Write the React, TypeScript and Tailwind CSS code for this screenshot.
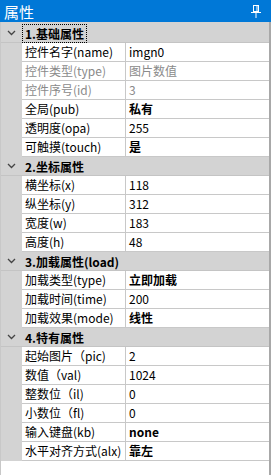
import React from "react";

type Row = { k: string; v: string; dim?: boolean; bold?: boolean };
type Sec = { title: string; rows: Row[]; focus?: boolean };

const secs: Sec[] = [
  {
    title: "1.基础属性",
    focus: true,
    rows: [
      { k: "控件名字(name)", v: "imgn0" },
      { k: "控件类型(type)", v: "图片数值", dim: true },
      { k: "控件序号(id)", v: "3", dim: true },
      { k: "全局(pub)", v: "私有", bold: true },
      { k: "透明度(opa)", v: "255" },
      { k: "可触摸(touch)", v: "是", bold: true },
    ],
  },
  {
    title: "2.坐标属性",
    rows: [
      { k: "横坐标(x)", v: "118" },
      { k: "纵坐标(y)", v: "312" },
      { k: "宽度(w)", v: "183" },
      { k: "高度(h)", v: "48" },
    ],
  },
  {
    title: "3.加载属性(load)",
    rows: [
      { k: "加载类型(type)", v: "立即加载", bold: true },
      { k: "加载时间(time)", v: "200" },
      { k: "加载效果(mode)", v: "线性", bold: true },
    ],
  },
  {
    title: "4.特有属性",
    rows: [
      { k: "起始图片（pic)", v: "2" },
      { k: "数值（val)", v: "1024" },
      { k: "整数位（il)", v: "0" },
      { k: "小数位（fl)", v: "0" },
      { k: "输入键盘(kb)", v: "none", bold: true },
      { k: "水平对齐方式(alx)", v: "靠左", bold: true },
    ],
  },
];

const font = { fontFamily: '"Noto Sans CJK SC", "Noto Sans", sans-serif' };

function Chevron() {
  return (
    <svg width="9" height="6" viewBox="0 0 9 6" className="block">
      <polyline points="1,1 4.5,4.5 8,1" fill="none" stroke="#444" strokeWidth="1.3" />
    </svg>
  );
}

function Pin() {
  return (
    <svg width="10" height="13" viewBox="0 0 10 13" className="block">
      <rect x="2.5" y="0.5" width="5" height="6" fill="none" stroke="#fff" strokeWidth="1" />
      <line x1="6" y1="1" x2="6" y2="6.5" stroke="#fff" strokeWidth="1" />
      <line x1="0" y1="7.5" x2="10" y2="7.5" stroke="#fff" strokeWidth="1" />
      <line x1="5" y1="8" x2="5" y2="13" stroke="#fff" strokeWidth="1" />
    </svg>
  );
}

export default function App() {
  return (
    <div className="w-[271px] h-[475px] bg-white flex flex-col overflow-hidden text-[12px] text-black" style={font}>
      <div className="h-[22px] shrink-0 bg-[#0078d7] flex items-center justify-between pl-[4px] pr-[10px]">
        <span className="text-white text-[15px] leading-none">属性</span>
        <Pin />
      </div>
      <div className="flex-1 flex flex-col border-l border-l-[#c8c8c8] border-r-2 border-r-[#a8a8a8]">
        {secs.map((s, si) => (
          <div key={si} className="flex flex-col">
            <div
              className={`flex bg-[#d3d3d3] border-b border-b-[#c4c4c4] ${si === 0 ? "h-[21px] pt-[2px]" : "h-[19px]"}`}
            >
              <div className="w-[21px] flex items-center justify-center">
                <Chevron />
              </div>
              <div className="flex items-center">
                <span
                  className={`font-bold leading-[17px] px-[2px] ${s.focus ? "border border-dotted border-black" : "border border-transparent"}`}
                >
                  {s.title}
                </span>
              </div>
            </div>
            {s.rows.map((r, ri) => (
              <div key={ri} className="flex h-[19px]">
                <div className="w-[21px] bg-[#d3d3d3] shrink-0" />
                <div
                  className={`w-[104px] shrink-0 border-b border-r border-[#c8c8c8] pl-[3px] leading-[18px] whitespace-nowrap overflow-hidden ${r.dim ? "text-[#8a8a8a]" : ""}`}
                >
                  {r.k}
                </div>
                <div
                  className={`flex-1 border-b border-[#c8c8c8] pl-[3px] leading-[18px] whitespace-nowrap ${r.dim ? "text-[#8a8a8a]" : ""} ${r.bold ? "font-bold" : ""}`}
                >
                  {r.v}
                </div>
              </div>
            ))}
          </div>
        ))}
        <div className="flex-1" />
      </div>
    </div>
  );
}
